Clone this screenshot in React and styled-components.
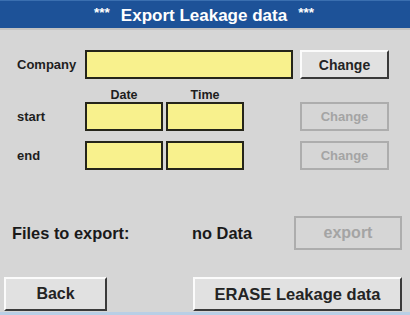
import styled, { createGlobalStyle } from "styled-components";

const GlobalStyle = createGlobalStyle`
  html, body {
    margin: 0;
    padding: 0;
    background: #d6d6d6;
  }
  body {
    font-family: "Liberation Sans", Arial, sans-serif;
    font-weight: 700;
  }
`;

function App() {
  return (
    <Screen>
      <GlobalStyle />
      <TitleBar>
        <Stars>***</Stars>
        <TitleText>Export Leakage data</TitleText>
        <Stars>***</Stars>
      </TitleBar>

      <Form>
        <Row>
          <Label>Company</Label>
          <Field w={208} />
          <Button w={89} h={29} size={14} style={{ marginLeft: 7 }}>
            Change
          </Button>
        </Row>

        <HeadRow>
          <ColHead>Date</ColHead>
          <ColHead>Time</ColHead>
        </HeadRow>

        <Row>
          <Label>start</Label>
          <Field w={78} />
          <Field w={78} gap />
          <Button disabled w={89} h={29} size={13} offset>
            Change
          </Button>
        </Row>

        <Row top={10}>
          <Label>end</Label>
          <Field w={78} />
          <Field w={78} gap />
          <Button disabled w={89} h={29} size={13} offset>
            Change
          </Button>
        </Row>
      </Form>

      <FilesRow>
        <FilesLabel>Files to export:</FilesLabel>
        <FilesValue>no Data</FilesValue>
        <Button disabled w={108} h={34} size={16}>
          export
        </Button>
      </FilesRow>

      <BottomRow>
        <Button w={103} h={34} size={16}>
          Back
        </Button>
        <Button w={209} h={34} size={16.5}>
          ERASE Leakage data
        </Button>
      </BottomRow>
      <BottomLine />
    </Screen>
  );
}
export default App;

const Screen = styled.div`
  width: 410px;
  height: 315px;
  display: flex;
  flex-direction: column;
  background: #d6d6d6;
  overflow: hidden;
`;

const TitleBar = styled.div`
  height: 27px;
  display: flex;
  align-items: center;
  justify-content: center;
  gap: 11px;
  background: #1d5298;
  border-top: 1px solid #3a6fb0;
  border-bottom: 2px solid #c2c2c2;
  color: #ffffff;
  padding-right: 2px;
`;

const TitleText = styled.span`
  font-size: 17px;
  line-height: 20px;
  padding-top: 2px;
`;

const Stars = styled.span`
  font-size: 13.5px;
  line-height: 16px;
  padding-bottom: 3px;
`;

const Form = styled.div`
  display: flex;
  flex-direction: column;
  padding: 20px 0 0 17px;
`;

const Row = styled.div`
  display: flex;
  align-items: center;
  height: 29px;
  margin-top: ${(p) => p.top || 0}px;
`;

const Label = styled.span`
  width: 68px;
  font-size: 13px;
  color: #1e1e1e;
`;

const Field = styled.div`
  box-sizing: border-box;
  width: ${(p) => p.w}px;
  height: 29px;
  margin-left: ${(p) => (p.gap ? 3 : 0)}px;
  background: #f8f18d;
  border: 2px solid #25251a;
`;

const HeadRow = styled.div`
  display: flex;
  align-items: flex-end;
  height: 23px;
  padding-left: 68px;
`;

const ColHead = styled.span`
  width: 78px;
  margin-right: 3px;
  text-align: center;
  font-size: 12.5px;
  line-height: 14px;
  color: #1e1e1e;
`;

const Button = styled.div`
  box-sizing: border-box;
  width: ${(p) => p.w}px;
  height: ${(p) => p.h}px;
  margin-left: ${(p) => (p.offset ? 56 : 0)}px;
  display: flex;
  align-items: center;
  justify-content: center;
  font-size: ${(p) => p.size}px;
  background: ${(p) => (p.disabled ? "#d6d6d6" : "#e1e1e1")};
  color: ${(p) => (p.disabled ? "#a4a4a4" : "#242424")};
  border: 2px solid;
  border-color: ${(p) =>
    p.disabled ? "#adadad" : "#fbfbfb #3a3a3a #3a3a3a #fbfbfb"};
`;

const FilesRow = styled.div`
  display: flex;
  align-items: center;
  margin-top: 46px;
  padding-left: 12px;
`;

const FilesLabel = styled.span`
  width: 180px;
  font-size: 16.4px;
  color: #1a1a1a;
`;

const FilesValue = styled.span`
  width: 102px;
  font-size: 16.4px;
  color: #1a1a1a;
`;

const BottomRow = styled.div`
  display: flex;
  justify-content: space-between;
  margin-top: 27px;
  padding: 0 8px 0 4px;
`;

const BottomLine = styled.div`
  margin-top: 1px;
  height: 3px;
  background: #b9cfe6;
`;
